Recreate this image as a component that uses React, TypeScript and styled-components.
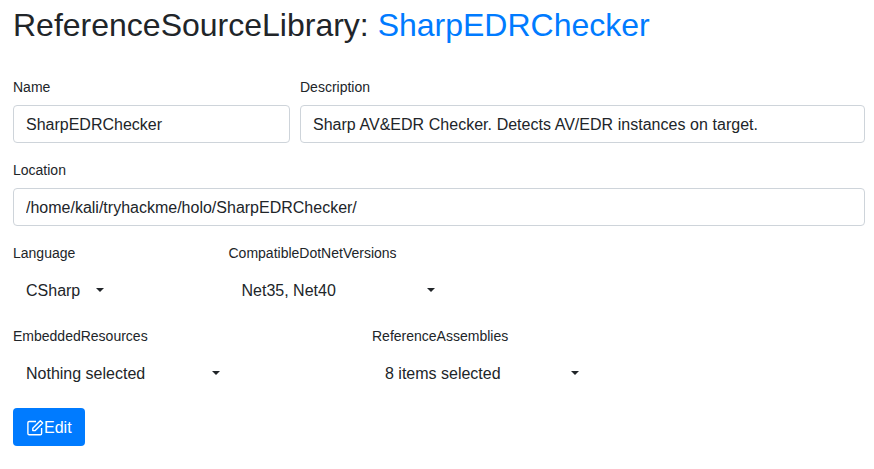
import React from "react";
import styled, { createGlobalStyle } from "styled-components";

const GlobalStyle = createGlobalStyle`
  *, *::before, *::after { box-sizing: border-box; }
  body {
    margin: 0;
    background: #fff;
    color: #212529;
    font: 400 16px/24px "Liberation Sans", Arial, sans-serif;
  }
`;

const Page = styled.main`
  width: 874px;
  height: 469px;
  padding: 6px 9px 0 13px;
  overflow: hidden;
`;

const Title = styled.h1`
  margin: 0 0 33px;
  font-size: 32px;
  font-weight: 400;
  line-height: 38px;
`;

const TitleLink = styled.a`
  color: #007bff;
  text-decoration: none;
`;

const Row = styled.div`
  display: flex;
  gap: 10px;
  height: 66px;
  margin-bottom: 17px;

  &:last-of-type { margin-bottom: 16px; }
`;

const Field = styled.div<{ $width?: number }>`
  display: flex;
  flex-direction: column;
  flex: ${(p) => (p.$width ? `0 0 ${p.$width}px` : "1 1 0")};
  min-width: 0;
`;

const Label = styled.label`
  height: 21px;
  margin-bottom: 7px;
  font-size: 14px;
  line-height: 21px;
`;

const Input = styled.input`
  width: 100%;
  height: 38px;
  padding: 7px 12px 5px;
  border: 1px solid #ced4da;
  border-radius: 4px;
  background: #fff;
  color: #212529;
  font: inherit;
  word-spacing: 0.25px;
`;

const Select = styled.button<{ $width: number }>`
  display: flex;
  align-items: center;
  justify-content: space-between;
  width: ${(p) => p.$width}px;
  height: 38px;
  padding: 7px 12px 5px 13px;
  border: 0;
  background: transparent;
  color: #212529;
  font: inherit;
  white-space: nowrap;

  &::after {
    content: "";
    margin-bottom: 2px;
    border-top: 4.8px solid;
    border-right: 4.8px solid transparent;
    border-left: 4.8px solid transparent;
  }
`;

const EditButton = styled.button`
  display: flex;
  align-items: center;
  width: 72px;
  height: 38px;
  padding: 2px 13px 0;
  border: 0;
  border-radius: 4px;
  background: #007bff;
  color: #fff;
  font: inherit;

  svg { flex: none; }
`;

function EditIcon() {
  return (
    <svg width="18" height="18" viewBox="0 0 18 18" fill="none" stroke="currentColor" strokeWidth="1.4" strokeLinejoin="round">
      <path d="M10 2.500H3.200Q1.900 2.500 1.900 3.800V14.500Q1.900 15.800 3.200 15.800H14.300Q15.600 15.800 15.600 14.500V9" />
      <path d="M14.300 1.700 16.700 4.100 9.200 11.600H6.800V9.200Z" />
    </svg>
  );
}

export default function App() {
  return (
    <>
      <GlobalStyle />
      <Page>
        <Title>
          ReferenceSourceLibrary: <TitleLink>SharpEDRChecker</TitleLink>
        </Title>
        <Row>
          <Field $width={277}>
            <Label>Name</Label>
            <Input readOnly value="SharpEDRChecker" />
          </Field>
          <Field>
            <Label>Description</Label>
            <Input readOnly value="Sharp AV&EDR Checker. Detects AV/EDR instances on target." />
          </Field>
        </Row>
        <Row>
          <Field>
            <Label>Location</Label>
            <Input readOnly value="/home/kali/tryhackme/holo/SharpEDRChecker/" />
          </Field>
        </Row>
        <Row>
          <Field $width={205.500}>
            <Label>Language</Label>
            <Select $width={103}>CSharp</Select>
          </Field>
          <Field>
            <Label>CompatibleDotNetVersions</Label>
            <Select $width={218.500}>Net35, Net40</Select>
          </Field>
        </Row>
        <Row>
          <Field $width={349}>
            <Label>EmbeddedResources</Label>
            <Select $width={219}>Nothing selected</Select>
          </Field>
          <Field>
            <Label>ReferenceAssemblies</Label>
            <Select $width={219}>8 items selected</Select>
          </Field>
        </Row>
        <EditButton>
          <EditIcon />
          Edit
        </EditButton>
      </Page>
    </>
  );
}
